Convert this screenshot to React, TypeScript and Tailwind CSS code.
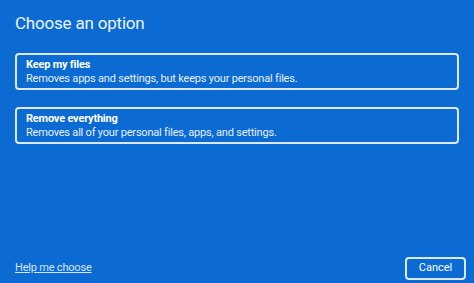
export default function App() {
  return (
    <div
      className="w-[474px] h-[283px] bg-[#0b6bd3] text-white flex flex-col overflow-hidden"
      style={{ fontFamily: 'Roboto, "Noto Sans", sans-serif' }}
    >
      <h1 className="pl-[15px] pt-[11px] text-[17px] leading-[24px] tracking-[-0.2px] font-normal text-[#eef5ff]">
        Choose an option
      </h1>

      <div className="mt-[18px] mx-[15px] flex flex-col gap-[17px]">
        <button className="h-[37px] border-2 border-[#dbe9fb] rounded-[4px] pl-[9px] text-left flex flex-col justify-center">
          <span className="text-[11px] leading-[14px] font-bold tracking-[-0.2px]">Keep my files</span>
          <span className="text-[11px] leading-[14px] tracking-[-0.2px] text-[#e6f0fc]">
            Removes apps and settings, but keeps your personal files.
          </span>
        </button>
        <button className="h-[37px] border-2 border-[#dbe9fb] rounded-[4px] pl-[9px] text-left flex flex-col justify-center">
          <span className="text-[11px] leading-[14px] font-bold tracking-[-0.2px]">Remove everything</span>
          <span className="text-[11px] leading-[14px] tracking-[-0.2px] text-[#e6f0fc]">
            Removes all of your personal files, apps, and settings.
          </span>
        </button>
      </div>

      <div className="mt-auto mb-[3px] pl-[15px] pr-[8px] flex items-center justify-between">
        <a className="text-[11px] underline tracking-[-0.2px] text-[#d6e6fb] cursor-pointer">Help me choose</a>
        <button className="w-[61px] h-[23px] border-2 border-[#dbe9fb] rounded-[4px] text-[11px] text-white">
          Cancel
        </button>
      </div>
    </div>
  );
}
